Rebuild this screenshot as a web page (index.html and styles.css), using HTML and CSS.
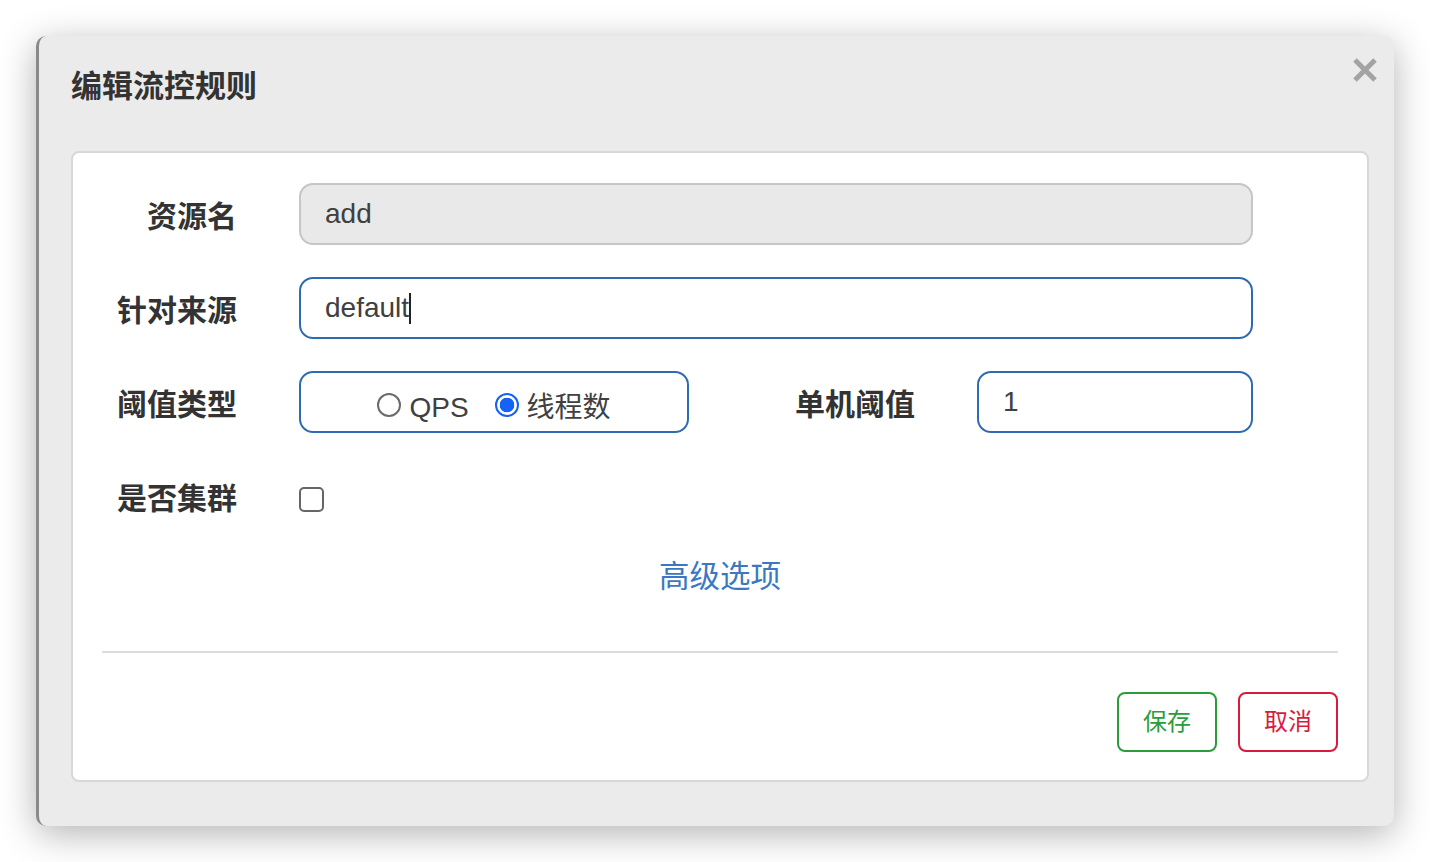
FILE: index.html
```html
<!DOCTYPE html>
<html lang="zh">
<head>
<meta charset="utf-8">
<title>编辑流控规则</title>
<link rel="stylesheet" href="styles.css">
</head>
<body>
<div class="dialog">
  <div class="dialog-header">
    <h4 class="dialog-title">编辑流控规则</h4>
    <button class="close" aria-label="关闭">
      <svg width="26" height="26" viewBox="0 0 26 26"><path d="M3 3 L23 23 M23 3 L3 23" stroke="#a3a3a3" stroke-width="5" stroke-linecap="butt" fill="none"/></svg>
    </button>
  </div>
  <div class="panel">
    <div class="form-row">
      <label class="label">资源名</label>
      <div class="field readonly">add</div>
    </div>
    <div class="form-row">
      <label class="label">针对来源</label>
      <div class="field active">default<span class="caret"></span></div>
    </div>
    <div class="form-row">
      <label class="label">阈值类型</label>
      <div class="radio-group">
        <span class="radio"></span><span class="radio-text">QPS</span>
        <span class="radio checked"></span><span class="radio-text">线程数</span>
      </div>
      <label class="label label-wide">单机阈值</label>
      <div class="field active short">1</div>
    </div>
    <div class="form-row">
      <label class="label">是否集群</label>
      <span class="checkbox"></span>
    </div>
    <div class="advanced"><a class="link">高级选项</a></div>
    <div class="divider"></div>
    <div class="actions">
      <button class="btn btn-save">保存</button>
      <button class="btn btn-cancel">取消</button>
    </div>
  </div>
</div>
</body>
</html>
```
FILE: styles.css
```css
html, body {
  margin: 0;
  padding: 0;
  background: #ffffff;
  font-family: "Liberation Sans", "Noto Sans CJK SC", sans-serif;
  color: #333;
}

body {
  min-height: 862px;
  padding-top: 36px;
  box-sizing: border-box;
}

.dialog {
  position: relative;
  margin: 0 0 0 36px;
  width: 1358px;
  height: 790px;
  box-sizing: border-box;
  background: #ebebeb;
  border-left: 3px solid #8a8a8a;
  border-radius: 10px;
  box-shadow: 0 8px 36px rgba(0, 0, 0, 0.3);
}

.dialog-header {
  height: 115px;
  box-sizing: border-box;
  padding: 29px 0 0 32px;
}

.dialog-title {
  margin: 0;
  font-family: "Noto Sans CJK SC", sans-serif;
  font-size: 31px;
  line-height: 38px;
  font-weight: 700;
  color: #333;
}

.close {
  position: absolute;
  top: 21px;
  right: 16px;
  padding: 0;
  border: 0;
  background: none;
  width: 26px;
  height: 26px;
  line-height: 0;
}

.panel {
  margin-left: 32px;
  width: 1298px;
  height: 631px;
  box-sizing: border-box;
  background: #fff;
  border: 2px solid #d8d8d8;
  border-radius: 8px;
  padding-top: 30px;
}

.form-row {
  display: flex;
  align-items: center;
  height: 62px;
  margin-bottom: 32px;
}

.label {
  width: 164px;
  margin-right: 62px;
  flex: none;
  text-align: right;
  font-family: "Noto Sans CJK SC", sans-serif;
  font-size: 30px;
  font-weight: 700;
  color: #333;
}

.label-wide {
  width: 226px;
}

.field {
  width: 954px;
  height: 62px;
  box-sizing: border-box;
  border: 2px solid #2e6bb3;
  border-radius: 14px;
  padding-left: 24px;
  display: flex;
  align-items: center;
  font-size: 28px;
  color: #404040;
}

.field.readonly {
  background: #e9e9e9;
  border-color: #c6c6c6;
}

.field.short {
  width: 276px;
}

.caret {
  display: inline-block;
  width: 2px;
  height: 31px;
  background: #222;
}

.radio-group {
  width: 390px;
  height: 62px;
  box-sizing: border-box;
  flex: none;
  border: 2px solid #2e6bb3;
  border-radius: 14px;
  padding-top: 12px;
  display: flex;
  align-items: center;
  justify-content: center;
  font-size: 28px;
  color: #404040;
}

.radio {
  width: 24px;
  height: 24px;
  box-sizing: border-box;
  border: 2px solid #6b6b6b;
  border-radius: 50%;
  margin-right: 8px;
  transform: translateY(-3px);
}

.radio.checked {
  border: 2px solid #1463f5;
  background: radial-gradient(circle, #1463f5 0 7px, #fff 7.6px);
  margin-left: 26px;
}

.radio-text {
  line-height: 1;
}

.checkbox {
  display: inline-block;
  width: 25px;
  height: 25px;
  box-sizing: border-box;
  border: 2px solid #666;
  border-radius: 5px;
  margin-top: 7px;
}

.advanced {
  text-align: center;
  margin-top: -3px;
  height: 36px;
  width: 1294px;
}

.link {
  font-family: "Noto Sans CJK SC", sans-serif;
  font-size: 30.5px;
  line-height: 36px;
  color: #3a78c4;
}

.divider {
  margin: 59px 29px 0 29px;
  height: 2px;
  background: #dddddd;
}

.actions {
  display: flex;
  justify-content: flex-end;
  gap: 21px;
  margin: 39px 29px 0 0;
}

.btn {
  width: 100px;
  height: 60px;
  box-sizing: border-box;
  background: #fff;
  border-radius: 8px;
  font-family: "Noto Sans CJK SC", sans-serif;
  font-size: 24px;
  padding: 0 0 5px 0;
}

.btn-save {
  border: 2px solid #2a9d3a;
  color: #2a9d3a;
}

.btn-cancel {
  border: 2px solid #d81b3c;
  color: #d81b3c;
}
```
